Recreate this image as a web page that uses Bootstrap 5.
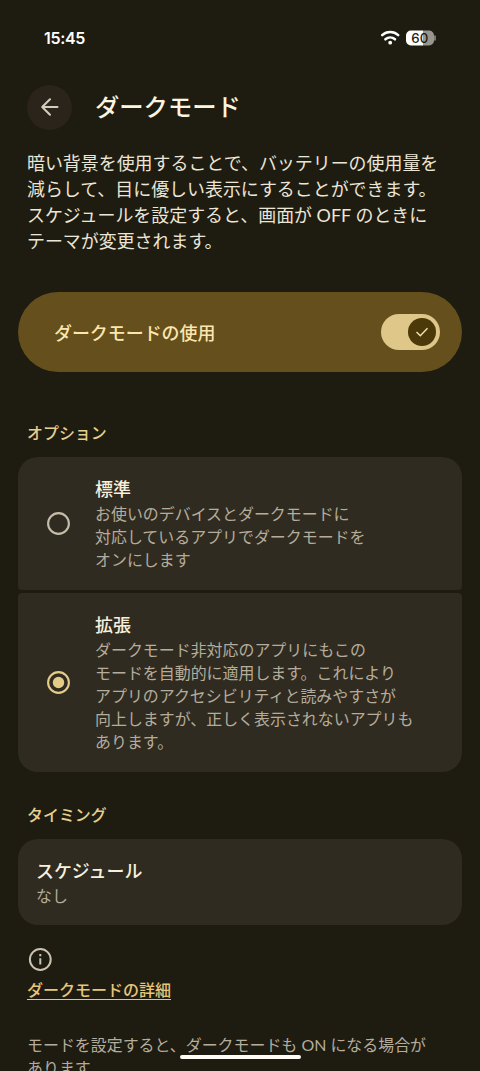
<!DOCTYPE html>
<html lang="ja" data-bs-theme="dark">
<head>
<meta charset="utf-8">
<meta name="viewport" content="width=device-width, initial-scale=1">
<title>ダークモード</title>
<link href="https://cdn.jsdelivr.net/npm/bootstrap@5.3.0/dist/css/bootstrap.min.css" rel="stylesheet">
<style>
  body { background: #1e1b11; color: #ece6d6; font-family: Lato, "Noto Sans CJK JP", sans-serif; }
  .screen { height: 1071px; padding: 0 18px; }
  .inset { padding-left: 9px; padding-right: 9px; }
  .status { height: 76px; padding: 0 26px 0 26px; color: #fff; }
  .clock { font: 600 16px/20px Inter, sans-serif; letter-spacing: -.35px; }
  .app-head { height: 62px; gap: 23px; }
  .back { width: 45px; height: 45px; background: #2a241a; }
  .app-title { font-size: 24.3px; line-height: 32px; font-weight: 500; color: #fbf5e0; }
  .intro { font-size: 17.95px; line-height: 26px; margin: 12px 0 38px; }
  .main-switch { height: 80px; border-radius: 41px; background: #654f1d; padding: 0 22px 0 36px; color: #fbe7ae; }
  .main-switch .line-lg { padding-top: 2px; }
  .line-lg { font-size: 17.95px; line-height: 26px; font-weight: 500; }
  .toggle { width: 59px; height: 36px; background: #dfc689; padding-right: 4px; }
  .thumb { width: 28px; height: 28px; background: #4b390a; }
  .sect { font-size: 15.95px; line-height: 24px; font-weight: 500; color: #e5cf91; }
  .tile { background: #302b20; }
  .tile .line-lg { color: #f6f0dd; }
  .option { padding-left: 28px; gap: 24px; }
  .option-a { height: 133px; border-radius: 20px 20px 4px 4px; }
  .option-b { height: 179px; border-radius: 4px 4px 20px 20px; }
  .sub { font-size: 15.95px; line-height: 23px; color: #b5ad9c; }
  .schedule { height: 86px; border-radius: 20px; padding: 19px 18px 0; }
  .more { font-size: 16px; line-height: 18px; font-weight: 500; color: #e5c67c; border-bottom: 1px solid #e5c67c; }
  .home-bar { left: 180px; top: 1055px; width: 121px; height: 4px; background: #fffdf5; }
</style>
</head>
<body>
<div class="screen position-relative overflow-hidden">
  <header class="status d-flex justify-content-between align-items-center">
    <span class="clock">15:45</span>
    <svg width="56" height="18" viewBox="0 0 56 18" fill="none">
      <g stroke="#fff" stroke-width="2.500" stroke-linecap="round">
        <path d="M2.200 6.200c4.500-4.200 11.500-4.200 16 0"/>
        <path d="M5.400 10.300c2.800-2.500 6.800-2.500 9.600 0"/>
      </g>
      <circle cx="10.200" cy="13.700" r="1.900" fill="#fff"/>
      <path d="M31 1.500h12v15H31a5 5 0 0 1-5-5v-5a5 5 0 0 1 5-5z" fill="#fff"/>
      <path d="M43 1.500h6a5 5 0 0 1 5 5v5a5 5 0 0 1-5 5h-6z" fill="#98968f"/>
      <path d="M55 6.500v5" stroke="#98968f" stroke-width="1.500"/>
      <text x="39.800" y="13.800" text-anchor="middle" font-family="Inter" font-size="13.300" font-weight="500" fill="#1e1b11">60</text>
    </svg>
  </header>

  <div class="app-head inset d-flex align-items-center">
    <div class="back rounded-circle d-flex align-items-center justify-content-center">
      <svg width="20" height="20" viewBox="0 0 20 20" fill="none" stroke="#d5cdbb" stroke-width="2" stroke-linecap="round" stroke-linejoin="round"><path d="M17.500 10H2.500M10 2.200L2.200 10l7.800 7.800"/></svg>
    </div>
    <h1 class="app-title m-0">ダークモード</h1>
  </div>

  <p class="intro inset text-nowrap">暗い背景を使用することで、バッテリーの使用量を<br>減らして、目に優しい表示にすることができます。<br>スケジュールを設定すると、画面が OFF のときに<br>テーマが変更されます。</p>

  <div class="main-switch d-flex align-items-center justify-content-between">
    <span class="line-lg">ダークモードの使用</span>
    <span class="toggle rounded-pill d-flex align-items-center justify-content-end">
      <span class="thumb rounded-circle d-flex align-items-center justify-content-center">
        <svg width="14" height="12" viewBox="0 0 14 12" fill="none" stroke="#f5e2b2" stroke-width="1.400"><path d="M1.500 6l3.800 3.800L12.500 2.300"/></svg>
      </span>
    </span>
  </div>

  <h2 class="sect inset mb-0" style="margin-top:49px">オプション</h2>
  <div class="d-flex flex-column" style="margin-top:12px;gap:3px">
    <div class="tile option option-a d-flex align-items-center">
      <svg class="flex-shrink-0" width="25" height="25" viewBox="0 0 25 25" fill="none" stroke="#c5bdab" stroke-width="2.100"><circle cx="12.500" cy="12.500" r="10.400"/></svg>
      <div class="text-nowrap">
        <div class="line-lg">標準</div>
        <div class="sub">お使いのデバイスとダークモードに<br>対応しているアプリでダークモードを<br>オンにします</div>
      </div>
    </div>
    <div class="tile option option-b d-flex align-items-center">
      <svg class="flex-shrink-0" width="25" height="25" viewBox="0 0 25 25" fill="none" stroke="#e5cb88" stroke-width="2.100"><circle cx="12.500" cy="12.500" r="10.400"/><circle cx="12.500" cy="12.500" r="5.700" fill="#e5cb88" stroke="none"/></svg>
      <div class="text-nowrap">
        <div class="line-lg">拡張</div>
        <div class="sub">ダークモード非対応のアプリにもこの<br>モードを自動的に適用します。これにより<br>アプリのアクセシビリティと読みやすさが<br>向上しますが、正しく表示されないアプリも<br>あります。</div>
      </div>
    </div>
  </div>

  <h2 class="sect inset mb-0" style="margin-top:31px">タイミング</h2>
  <div class="tile schedule" style="margin-top:12px">
    <div class="line-lg">スケジュール</div>
    <div class="sub">なし</div>
  </div>

  <footer class="inset text-nowrap" style="padding-top:22px">
    <svg class="d-block" width="26" height="25" viewBox="0 0 26 25" fill="none" stroke="#cbc3b0" stroke-width="2"><circle cx="13.300" cy="12.500" r="10.400"/><path d="M13.300 11.200v6.300M13.300 7v2.200"/></svg>
    <div class="d-flex" style="margin-top:9px"><a class="more text-decoration-none" href="#">ダークモードの詳細</a></div>
    <p class="sub mb-0" style="margin-top:33px">モードを設定すると、ダークモードも ON になる場合が<br>あります</p>
  </footer>
  <div class="home-bar position-absolute rounded-pill"></div>
</div>
<script src="https://cdn.jsdelivr.net/npm/bootstrap@5.3.0/dist/js/bootstrap.bundle.min.js"></script>
</body>
</html>
